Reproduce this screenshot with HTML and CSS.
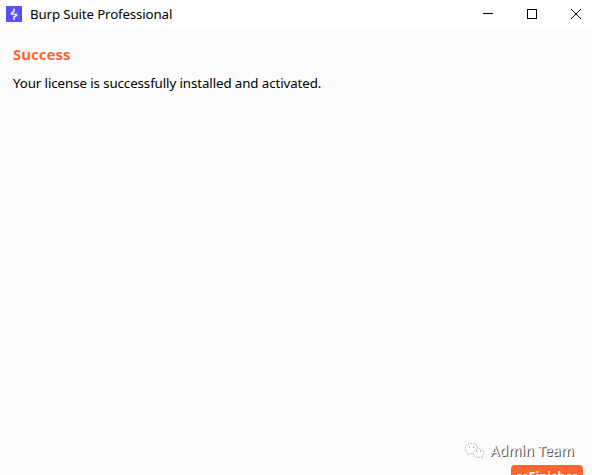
FILE: index.html
```html
<!DOCTYPE html>
<html lang="en">
<head>
<meta charset="utf-8">
<title>Burp Suite Professional</title>
<link rel="stylesheet" href="styles.css">
</head>
<body>
<main class="window">
  <header class="titlebar">
    <svg class="logo" viewBox="0 0 16 16"><rect width="16" height="16" fill="#5b4eff"/><path d="M8 2.500v3L5.500 7v1L10.500 8.500v1L8 11v3" fill="none" stroke="#eeebff" stroke-width="1.500"/></svg>
    <h1 class="title">Burp Suite Professional</h1>
    <div class="controls">
      <svg class="control" viewBox="0 0 44 28"><path d="M13 13.5h10" class="crisp"/></svg>
      <svg class="control" viewBox="0 0 44 28"><path d="M13.5 9.5h9v9h-9z" class="crisp"/></svg>
      <svg class="control" viewBox="0 0 44 28"><path d="M13 9l10 10M23 9L13 19"/></svg>
    </div>
  </header>
  <section class="content">
    <h2 class="heading">Success</h2>
    <p class="message">Your license is successfully installed and activated.</p>
  </section>
  <footer class="footer">
    <div class="mark">
      <svg class="chat" viewBox="0 0 22 18"><g fill="#fff" stroke="#aaa" stroke-width=".8" stroke-dasharray="1.5 1"><path d="M4 13l-.3-2.2C-1 7.5 1.5 1.5 7.5 1.5S15 7 12.5 9.5 6 11.500 6 11.500z"/><path d="M18.500 16l-2-1c-5 1.200-8-1.500-7.500-4.500 1-5 10.500-5 11 0 .1 1.500-.5 2.800-1.800 3.700z"/></g><path d="M5 5h1M9 5h1M12 9h1M16 9h1" stroke="#666"/></svg>
      <span class="mark-text">Admin Team</span>
    </div>
    <button class="finish"><i class="dash"></i><span class="finish-text">Finish</span><i class="dash"></i></button>
  </footer>
</main>
</body>
</html>
```
FILE: styles.css
```css
* { box-sizing: border-box; }
body { margin: 0; overflow: hidden; font-family: "Noto Sans", sans-serif; color: #000; }
.window { width: 592px; height: 475px; background: #fbfbfb; display: flex; flex-direction: column; overflow: hidden; }
.titlebar { flex: none; height: 29px; background: #fff; display: flex; align-items: flex-start; padding-left: 6px; }
.logo { width: 16px; height: 16px; margin-top: 6px; }
.title { margin: 4px 0 0 8px; font-size: 13.3px; line-height: 20px; font-weight: 400; letter-spacing: -.14px; white-space: nowrap; }
.controls { margin-left: auto; display: flex; margin-right: -10px; }
.control { width: 44px; height: 28px; fill: none; stroke: #000; stroke-width: 1; }
.crisp { shape-rendering: crispEdges; }
.content { flex: 1; padding: 15px 13px; }
.heading { margin: 0; font-size: 15px; line-height: 20px; font-weight: 700; color: #ff6633; }
.message { margin: 9px 0 0; font-size: 13.3px; line-height: 20px; letter-spacing: -.09px; white-space: nowrap; }
.footer { flex: none; height: 36px; display: flex; flex-direction: column; align-items: flex-end; padding-right: 9px; }
.mark { height: 26px; flex: none; display: flex; align-items: flex-start; margin-right: 9px; padding-top: 2px; }
.chat { width: 22px; height: 18px; margin: 1px 4px 0 0; }
.mark-text { font-size: 14px; line-height: 20px; letter-spacing: .15px; color: #fff; text-shadow: 1px 1px 0 #555, 1px 0 0 #888; white-space: nowrap; }
.finish { flex: none; display: flex; justify-content: center; gap: 2px; width: 72px; height: 26px; border: 0; border-radius: 4px; background: #ff6633; color: #fff; padding: 2px 0; font: 700 12.5px/20px "Noto Sans", sans-serif; }
.dash { width: 10px; height: 1px; margin-top: 7px; background: repeating-linear-gradient(90deg, #ffe4da 0 4px, transparent 4px 6px); }
```
